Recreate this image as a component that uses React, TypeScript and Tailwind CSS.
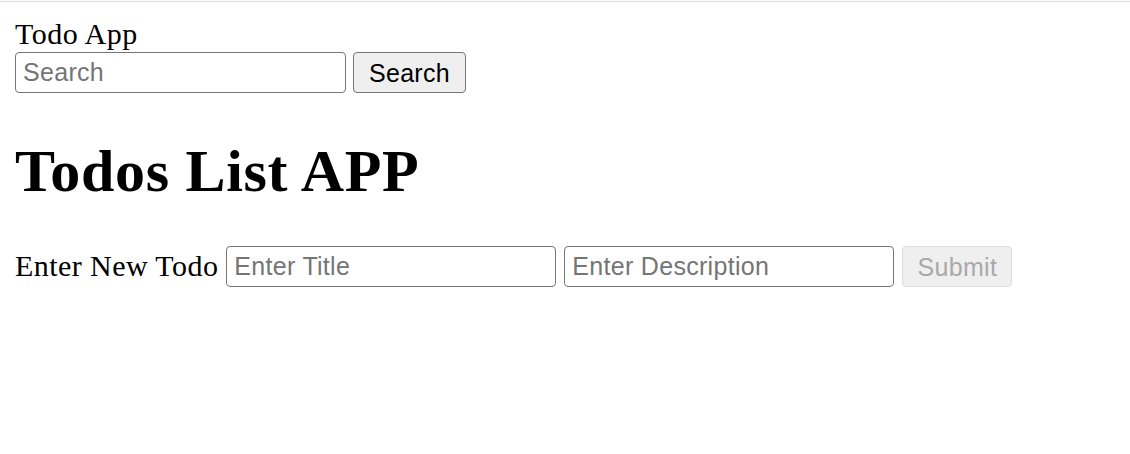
const serif = 'font-["Liberation_Serif","Times_New_Roman",serif]';
const sans = 'font-["Liberation_Sans",Arial,sans-serif] tracking-[0.3px]';

const inputCls = `h-[41px] rounded-[4px] border border-[#767676] bg-white px-[7px] text-[25px] text-black placeholder:text-[#757575] outline-none ${sans}`;

export default function App() {
  return (
    <div className={`min-h-[454px] bg-white text-black ${serif}`}>
      <div className="mt-px h-px bg-[#dddddd]" />
      <div className="pl-[15px] pt-[15px]">
        <div className="text-[30px] leading-[34.5px] tracking-[0.5px]">Todo App</div>

        <div className="flex items-center gap-[7px]">
          <input type="text" placeholder="Search" className={`${inputCls} w-[331px]`} />
          <button
            type="button"
            className={`h-[41px] w-[113px] rounded-[4px] border border-[#767676] bg-[#efefef] pt-[2px] text-[25px] text-black ${sans}`}
          >
            Search
          </button>
        </div>

        <h1 className="mt-[44px] text-[60px] font-bold leading-[69px] tracking-[0.7px]">Todos List APP</h1>

        <form className="mt-[40px] flex items-center gap-[8px]">
          <label className="text-[30px] leading-[34.5px] tracking-[0.43px]" htmlFor="title">
            Enter New Todo
          </label>
          <input id="title" type="text" placeholder="Enter Title" className={`${inputCls} w-[330px]`} />
          <input type="text" placeholder="Enter Description" className={`${inputCls} w-[330px]`} />
          <button
            type="submit"
            disabled
            className={`h-[41px] w-[110px] rounded-[4px] border border-[#dedede] bg-[#efefef] pt-[2px] text-[25px] text-[#a9a9a9] ${sans}`}
          >
            Submit
          </button>
        </form>
      </div>
    </div>
  );
}
